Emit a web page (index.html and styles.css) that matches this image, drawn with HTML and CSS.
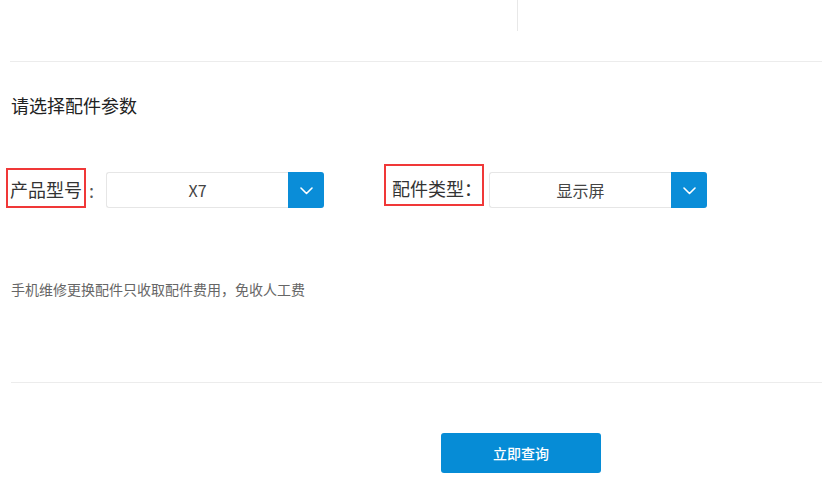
FILE: index.html
```html
<!DOCTYPE html>
<html lang="zh-CN">
<head>
<meta charset="utf-8">
<title>请选择配件参数</title>
<link rel="stylesheet" href="styles.css">
</head>
<body>
<div class="page">
  <div class="top">
    <div class="top-col"></div>
  </div>
  <h2 class="title">请选择配件参数</h2>
  <div class="form-row">
    <div class="group">
      <span class="label label-a">产品型号</span><span class="colon">:</span>
      <div class="select">
        <span class="select-value">X7</span>
        <span class="select-btn">
          <svg width="13" height="8" viewBox="0 0 13 8"><polyline points="1,1 6.5,6.5 12,1" fill="none" stroke="#fff" stroke-width="1.6" stroke-linecap="round" stroke-linejoin="round"/></svg>
        </span>
      </div>
    </div>
    <div class="group">
      <span class="label label-b">配件类型：</span>
      <div class="select select-b">
        <span class="select-value">显示屏</span>
        <span class="select-btn">
          <svg width="13" height="8" viewBox="0 0 13 8"><polyline points="1,1 6.5,6.5 12,1" fill="none" stroke="#fff" stroke-width="1.6" stroke-linecap="round" stroke-linejoin="round"/></svg>
        </span>
      </div>
    </div>
  </div>
  <p class="note">手机维修更换配件只收取配件费用，免收人工费</p>
  <div class="divider"></div>
  <button class="submit" type="button">立即查询</button>
</div>
</body>
</html>
```

FILE: styles.css
```css
* { box-sizing: border-box; }
html, body {
  margin: 0;
  padding: 0;
  background: #fff;
}
body {
  font-family: "Noto Sans CJK SC", "Noto Sans", "Liberation Sans", sans-serif;
  color: #333;
}
.page {
  padding-left: 10px;
  width: 822px;
  height: 495px;
  overflow: hidden;
}
.top {
  height: 62px;
  border-bottom: 1px solid #ececec;
}
.top-col {
  width: 508px;
  height: 31px;
  border-right: 1px solid #e8e8e8;
}
.title {
  margin: 34px 0 0 1px;
  font-size: 18px;
  line-height: 18px;
  font-weight: normal;
  color: #222;
}
.form-row {
  display: flex;
  gap: 60px;
  margin-top: 50px;
  margin-left: -4px;
  align-items: flex-end;
}
.group {
  display: flex;
  align-items: flex-end;
}
.label {
  display: inline-flex;
  align-items: center;
  border: 2px solid #f03838;
  padding: 0 2px;
  font-size: 18px;
  color: #333;
  white-space: nowrap;
}
.label-a {
  height: 40px;
  padding-top: 1px;
}
.label-b {
  height: 42px;
  margin-bottom: 2px;
  padding: 5px 0 0 6px;
}
.colon {
  width: 20px;
  padding-left: 3px;
  font-size: 18px;
  line-height: 36px;
  color: #555;
  align-self: flex-end;
}
.select {
  display: flex;
  width: 218px;
  height: 36px;
  border: 1px solid #e6e6e6;
  border-right: none;
  border-radius: 3px;
}
.select-b { margin-left: 5px; }
.select-value {
  flex: 1;
  text-align: center;
  font-size: 16px;
  line-height: 34px;
  color: #444;
}
.select-btn {
  width: 36px;
  margin: -1px 0;
  background: #0a8dd8;
  border-radius: 0 3px 3px 0;
  display: flex;
  align-items: center;
  justify-content: center;
}
.select-btn svg { margin-top: 1px; }
.note {
  margin: 74px 0 0 1px;
  font-size: 14px;
  line-height: 14px;
  color: #666;
}
.divider {
  margin: 86px 0 0 1px;
  border-top: 1px solid #ececec;
}
.submit {
  display: block;
  margin: 50px 0 0 431px;
  width: 160px;
  height: 40px;
  border: none;
  border-radius: 3px;
  background: #068cd6;
  color: #fff;
  font-family: "Noto Sans CJK SC", sans-serif;
  font-size: 14px;
  font-weight: 500;
  cursor: pointer;
}
```
